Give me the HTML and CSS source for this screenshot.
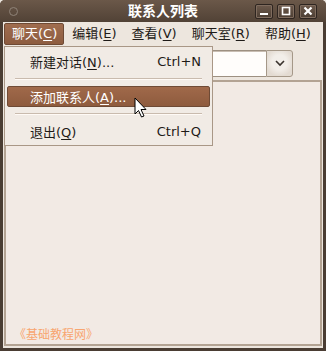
FILE: index.html
```html
<!DOCTYPE html>
<html>
<head>
<meta charset="utf-8">
<link rel="stylesheet" href="styles.css">
</head>
<body>
<div class="window">
  <div class="titlebar">
    <span class="win-icon"></span>
    <span class="title">联系人列表</span>
    <div class="buttons">
      <span class="wbtn"><svg width="10" height="10" viewBox="0 0 10 10"><rect x="1" y="7" width="8" height="2" fill="#fff"/></svg></span>
      <span class="wbtn"><svg width="10" height="10" viewBox="0 0 10 10"><rect x="1.5" y="1.5" width="7" height="7" fill="none" stroke="#fff" stroke-width="1.6"/></svg></span>
      <span class="wbtn"><svg width="10" height="10" viewBox="0 0 10 10"><path d="M1.5 1.5 L8.5 8.5 M8.5 1.5 L1.5 8.5" stroke="#fff" stroke-width="2.2"/></svg></span>
    </div>
  </div>
  <div class="menubar">
    <span class="mitem active">聊天(<u>C</u>)</span>
    <span class="mitem">编辑(<u>E</u>)</span>
    <span class="mitem">查看(<u>V</u>)</span>
    <span class="mitem">聊天室(<u>R</u>)</span>
    <span class="mitem">帮助(<u>H</u>)</span>
  </div>
  <div class="toolbar">
    <div class="combo">
      <div class="entry"></div>
      <div class="cbtn"><svg width="12" height="8" viewBox="0 0 12 8"><path d="M2 2 L6 6 L10 2" fill="none" stroke="#3a332e" stroke-width="1.6"/></svg></div>
    </div>
  </div>
  <div class="content">
    <div class="watermark">《基础教程网》</div>
  </div>
  <div class="dropdown">
    <div class="ditem"><span>新建对话(<u>N</u>)...</span><span class="acc">Ctrl+N</span></div>
    <div class="sep"></div>
    <div class="ditem hl"><span>添加联系人(<u>A</u>)...</span></div>
    <div class="sep"></div>
    <div class="ditem"><span>退出(<u>Q</u>)</span><span class="acc">Ctrl+Q</span></div>
  </div>
  <svg class="cursor" width="14" height="22" viewBox="0 0 14 22"><path d="M1 1 L1 17 L4.5 13.5 L7.5 20 L10 19 L7 12.5 L12 12.5 Z" fill="#fff" stroke="#000" stroke-width="1" stroke-linejoin="round"/></svg>
</div>
</body>
</html>
```
FILE: styles.css
```css
html, body { margin: 0; padding: 0; }
body { width: 326px; height: 351px; overflow: hidden; background: #ede6de; font-family: "DejaVu Sans", "Noto Sans CJK SC", sans-serif; font-size: 13px; color: #1e1a17; }
u { text-decoration: underline; text-underline-offset: 2px; }
.window { position: relative; width: 326px; height: 351px; box-sizing: border-box; display: flex; flex-direction: column; background: #ede6de; border-left: 3px solid #4a3d33; border-right: 3px solid #4a3d33; border-bottom: 3px solid #4a3d33; border-radius: 5px 5px 0 0; }
.titlebar { height: 22px; margin: 0 -3px; display: flex; align-items: center; position: relative; background: linear-gradient(#6b5849, #514236); border-radius: 5px 5px 0 0; flex: none; }
.win-icon { width: 7px; height: 7px; border: 1.5px solid #8f8378; border-radius: 50%; margin-left: 9px; }
.title { position: absolute; left: 0; right: 0; text-align: center; color: #fff; font-weight: bold; font-size: 14px; line-height: 22px; }
.buttons { margin-left: auto; margin-right: 9px; display: flex; gap: 4px; position: relative; }
.wbtn { width: 18px; height: 15px; box-sizing: border-box; border: 1px solid #2e2520; border-radius: 2px; background: linear-gradient(#6d5a4c, #4c3e33); display: flex; align-items: center; justify-content: center; box-shadow: inset 0 0 0 1px #7f6c5e; }
.menubar { height: 24px; display: flex; align-items: center; padding-left: 1px; flex: none; white-space: nowrap; }
.mitem { flex: none; padding: 0 7px 0 8px; line-height: 22px; height: 22px; box-sizing: border-box; }
.mitem.active { background: linear-gradient(#a06d4f, #8d5c40); color: #fff; border: 1px solid #6e4a35; border-radius: 2px; padding: 0 6px 0 7px; line-height: 20px; }
.toolbar { height: 34px; flex: none; display: flex; align-items: center; padding: 0 2px; }
.combo { display: flex; width: 288px; height: 27px; }
.entry { flex: 1; background: #fffdfb; border: 1px solid #9d9081; border-right: none; box-shadow: inset 0 1px 0 #c8bdb2; }
.cbtn { width: 27px; box-sizing: border-box; border: 1px solid #a59888; border-radius: 0 3px 3px 0; background: radial-gradient(circle at 50% 45%, #f2eee9 40%, #e3dbd2 75%); display: flex; align-items: center; justify-content: center; }
.content { flex: 1; margin: 0 1px 2px 1px; border: 2px solid #b3a393; background: #f2eae4; position: relative; }
.watermark { position: absolute; left: 8px; bottom: 2px; color: #f8a56f; font-size: 12px; font-family: "Noto Sans CJK SC", sans-serif; }
.dropdown { position: absolute; left: 1px; top: 46px; width: 209px; box-sizing: border-box; background: #f1ebe5; border: 1px solid #a99786; padding: 4px 2px 3px; white-space: nowrap; }
.ditem { height: 21px; display: flex; align-items: center; justify-content: space-between; padding: 0 9px 0 23px; }
.ditem.hl { background: linear-gradient(#a0694a, #8e5b3e); color: #fff; border: 1px solid #6e4a35; border-radius: 2px; box-sizing: border-box; padding-left: 22px; }
.sep { margin: 6px 8px; border-top: 1px solid #c9bbae; background: #fffaf6; height: 1px; }
.cursor { position: absolute; left: 131px; top: 97px; }
```
